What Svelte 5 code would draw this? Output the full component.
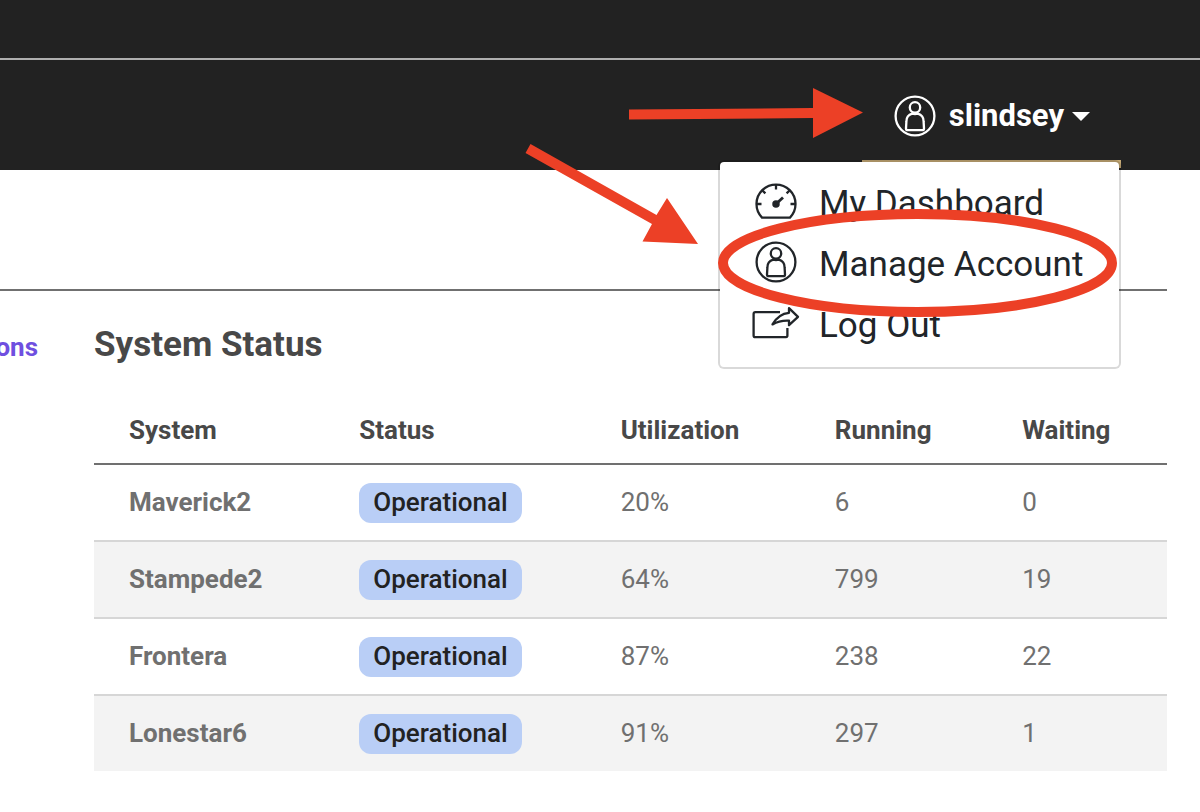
<script>
  const systems = [
    { name: 'Maverick2', status: 'Operational', utilization: '20%', running: 6, waiting: 0 },
    { name: 'Stampede2', status: 'Operational', utilization: '64%', running: 799, waiting: 19 },
    { name: 'Frontera', status: 'Operational', utilization: '87%', running: 238, waiting: 22 },
    { name: 'Lonestar6', status: 'Operational', utilization: '91%', running: 297, waiting: 1 }
  ];

  let open = $state(true);
</script>

{#snippet userIcon()}
  <svg class="user-icon" viewBox="0 0 42 42" aria-hidden="true">
    <circle cx="21" cy="21" r="19.4" />
    <circle cx="21" cy="12.4" r="5.2" />
    <path d="M18.2 18.6C14.6 19.6 12.4 22.6 12.4 26.4L12 33.4Q12 35.2 13.8 35.2H28.2Q30 35.2 30 33.4L29.6 26.4C29.6 22.6 27.4 19.6 23.8 18.6Q21 19.4 18.2 18.6Z" />
  </svg>
{/snippet}

<header>
  <div class="topbar"></div>
  <nav aria-label="Account">
    <div class="account">
      <button class="toggle" aria-expanded={open} onclick={() => (open = !open)}>
        {@render userIcon()}
        <span>slindsey</span>
        <svg class="caret" viewBox="0 0 18 9" aria-hidden="true"><path d="M0 0H18L9 9Z" /></svg>
      </button>
      {#if open}
        <ul class="menu">
          <li>
            <a href="#dashboard">
              <span class="icon">
                <svg class="gauge" viewBox="0 0 42 36" aria-hidden="true">
                  <path d="M7 34.6A19.5 19.5 0 1 1 35 34.6Z" />
                  <path d="M21 1.5V6.5M1.5 21H6.5M35.5 21H40.5M7.2 7.2L10.4 10.4M34.8 7.2L31.6 10.4" />
                  <path class="needle" d="M21 21L28 14.4" />
                  <circle class="hub" cx="21" cy="21" r="2.6" />
                </svg>
              </span>
              My Dashboard
            </a>
          </li>
          <li>
            <a href="#account"><span class="icon">{@render userIcon()}</span>Manage Account</a>
          </li>
          <li>
            <a href="#logout">
              <span class="icon">
                <svg class="share" viewBox="0 0 48 34" aria-hidden="true">
                  <path d="M28 6.2H3.4Q1.6 6.2 1.6 8V29.4Q1.6 31.2 3.4 31.2H34Q35.4 31.2 35.4 29.6V22" />
                  <path d="M37 2.2L46 10.8L37 19.2V14.6C30 14.2 25.5 15.4 20.5 18.4C24.5 11.4 30 7.4 37 6.8Z" />
                </svg>
              </span>
              Log Out
            </a>
          </li>
        </ul>
      {/if}
      <svg class="callouts" viewBox="521 80 600 240" aria-hidden="true">
        <polygon points="629,109.5 813,108 813,88 863,112.5 813,138 813,118 629,119.5" />
        <polygon points="530.5,144 656.5,215 667,198 698,244 642.5,241.5 652,224 525.5,153" />
        <ellipse cx="917.5" cy="263" rx="194.5" ry="49" />
      </svg>
    </div>
  </nav>
</header>

<main>
  <div class="page-head"></div>
  <div class="columns">
    <aside><a href="#allocations">ons</a></aside>
    <section>
      <h2>System Status</h2>
      <table>
        <thead>
          <tr>
            <th scope="col">System</th>
            <th scope="col">Status</th>
            <th scope="col">Utilization</th>
            <th scope="col">Running</th>
            <th scope="col">Waiting</th>
          </tr>
        </thead>
        <tbody>
          {#each systems as system (system.name)}
            <tr>
              <th scope="row">{system.name}</th>
              <td><span class="badge">{system.status}</span></td>
              <td>{system.utilization}</td>
              <td>{system.running}</td>
              <td>{system.waiting}</td>
            </tr>
          {/each}
        </tbody>
      </table>
    </section>
  </div>
</main>

<style>
  :global(body) {
    margin: 0;
    background: #fff;
    font-family: Roboto, 'Liberation Sans', sans-serif;
    font-size: 26px;
    color: #707070;
  }
  header {
    background: #222;
    color: #fff;
  }
  .topbar {
    height: 58px;
    border-bottom: 2px solid #afafaf;
  }
  nav {
    display: flex;
    justify-content: flex-end;
    padding: 0 79px 2px 0;
  }
  .account {
    position: relative;
  }
  .toggle {
    display: flex;
    align-items: center;
    height: 108px;
    box-sizing: border-box;
    padding: 12px 31px 0 32px;
    border: 0;
    border-bottom: 8px solid #c6aa76;
    background: none;
    color: inherit;
    font: 700 31px/36px Roboto, 'Liberation Sans', sans-serif;
    cursor: pointer;
  }
  .toggle span {
    margin: 0 8px 0 13px;
  }
  svg {
    display: block;
    fill: none;
    stroke: currentColor;
    stroke-width: 2.3;
    stroke-linejoin: round;
  }
  .user-icon {
    width: 42px;
    height: 42px;
  }
  .caret {
    width: 18px;
    height: 9px;
    fill: currentColor;
    stroke: none;
  }
  .menu {
    position: absolute;
    z-index: 1;
    top: 100px;
    right: 0;
    width: 403px;
    box-sizing: border-box;
    margin: 0;
    padding: 11px 0;
    list-style: none;
    background: #fff;
    background-clip: padding-box;
    border: 2px solid rgba(0, 0, 0, 0.15);
    border-radius: 6px;
  }
  .menu a {
    display: flex;
    align-items: center;
    gap: 19px;
    padding: 7px 32px;
    color: #212529;
    font-size: 35px;
    line-height: 47px;
    text-decoration: none;
    white-space: nowrap;
  }
  .icon {
    display: flex;
    flex: none;
    justify-content: center;
    width: 48px;
    padding-bottom: 5px;
  }
  .gauge {
    width: 42px;
    height: 36px;
  }
  .gauge .needle {
    stroke-width: 2.8;
  }
  .hub {
    fill: currentColor;
  }
  .share {
    width: 48px;
    height: 34px;
  }
  .callouts {
    position: absolute;
    z-index: 2;
    top: 20px;
    right: 0;
    width: 600px;
    height: 240px;
    fill: #ec4026;
    stroke: none;
    pointer-events: none;
  }
  .callouts ellipse {
    fill: none;
    stroke: #ec4026;
    stroke-width: 10;
  }
  .page-head {
    height: 119px;
    margin-right: 33px;
    border-bottom: 2px solid #707070;
  }
  .columns {
    display: flex;
    gap: 56px;
    padding: 32px 33px 40px 0;
  }
  aside {
    display: flex;
    flex: none;
    justify-content: flex-end;
    width: 38px;
    overflow: hidden;
    line-height: 48px;
  }
  aside a {
    color: #6f4fe0;
    font-weight: 700;
    text-decoration: none;
  }
  section {
    flex: 1;
  }
  h2 {
    margin: 0;
    color: #484848;
    font-size: 35px;
    font-weight: 700;
    line-height: 44px;
  }
  table {
    width: 100%;
    margin-top: 28px;
    table-layout: fixed;
    border-collapse: separate;
    border-spacing: 0;
  }
  th,
  td {
    padding: 18px 0 17px 35px;
    border-bottom: 2px solid #d6d6d6;
    line-height: 38px;
    text-align: left;
    vertical-align: top;
  }
  thead th {
    padding: 16px 0 14px 35px;
    border-color: #707070;
    color: #484848;
  }
  thead th:nth-child(1) {
    width: 18.2%;
  }
  thead th:nth-child(2) {
    width: 21.1%;
  }
  thead th:nth-child(3) {
    width: 16.7%;
  }
  thead th:nth-child(4) {
    width: 14.2%;
  }
  tbody tr:nth-child(even) {
    background: #f3f3f3;
  }
  tbody tr:last-child > * {
    border-bottom: 0;
  }
  .badge {
    display: inline-block;
    padding: 0 14px 2px;
    border-radius: 12px;
    background: #b9cef6;
    color: #222;
    font-weight: 500;
    vertical-align: top;
  }
</style>
